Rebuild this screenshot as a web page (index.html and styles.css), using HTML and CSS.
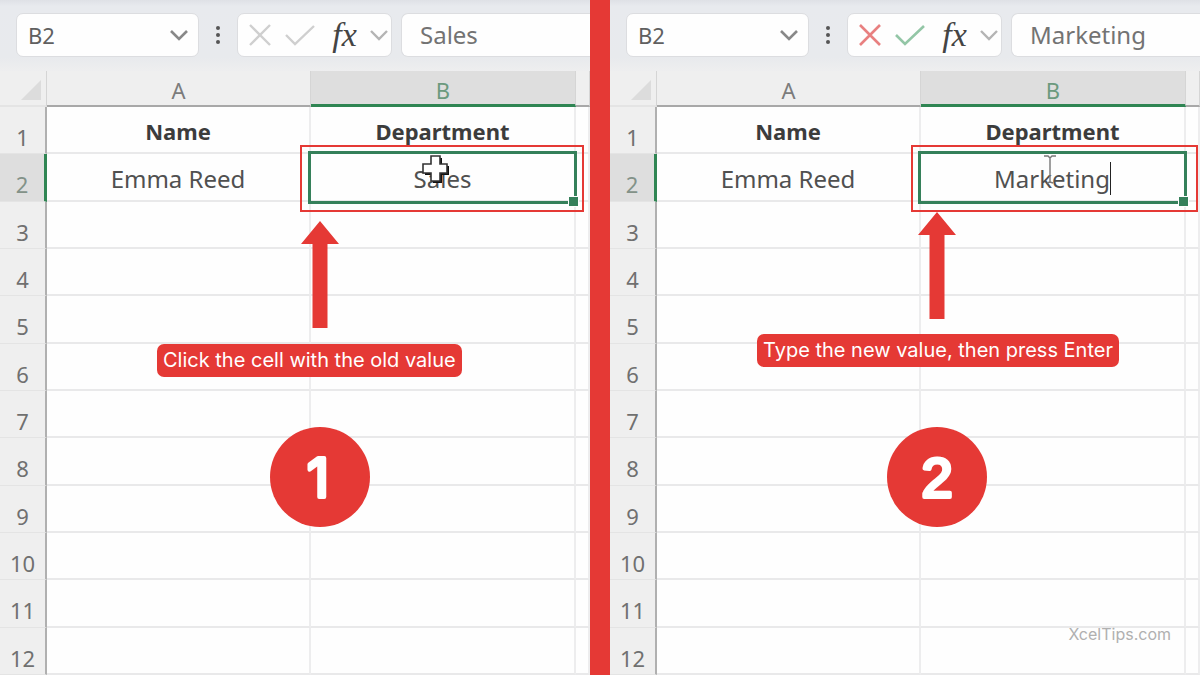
FILE: index.html
```html
<!DOCTYPE html>
<html lang="en">
<head>
    <meta charset="UTF-8">
    <meta name="viewport" content="width=device-width, initial-scale=1.0">
    <title>Edit a drop-down value - XcelTips</title>
    <link rel="stylesheet" href="styles.css">
</head>
<body>
    <main class="steps">
        <!-- Step 1: select the cell -->
        <section class="panel step-one">
            <div class="formula-bar">
                <div class="name-box">
                    <input type="text" class="name-input" value="B2" aria-label="Name box">
                    <button type="button" class="icon-btn" aria-label="Open name list">
                        <svg width="20" height="12" viewBox="0 0 20 12"><path d="M2 2l8 8 8-8" fill="none" stroke="#888" stroke-width="2.6"/></svg>
                    </button>
                </div>
                <svg class="dots" width="6" height="20" viewBox="0 0 6 20" fill="#555"><circle cx="3" cy="3" r="2"/><circle cx="3" cy="10" r="2"/><circle cx="3" cy="17" r="2"/></svg>
                <div class="fx-box">
                    <button type="button" class="icon-btn" aria-label="Cancel">
                        <svg width="24" height="24" viewBox="0 0 24 24"><path d="M2 2l20 20M22 2L2 22" fill="none" stroke="#cfcfcf" stroke-width="2.4"/></svg>
                    </button>
                    <button type="button" class="icon-btn" aria-label="Enter">
                        <svg width="30" height="22" viewBox="0 0 30 22"><path d="M1 11l9 9L29 2" fill="none" stroke="#cfcfcf" stroke-width="2.4"/></svg>
                    </button>
                    <button type="button" class="icon-btn fx">fx</button>
                    <button type="button" class="icon-btn" aria-label="More functions">
                        <svg width="18" height="12" viewBox="0 0 18 12"><path d="M1 2l8 8 8-8" fill="none" stroke="#b4b4b4" stroke-width="2.4"/></svg>
                    </button>
                </div>
                <input type="text" class="formula-input" value="Sales" aria-label="Formula bar">
            </div>
            <table class="sheet">
                <colgroup><col class="col-head"><col class="col-a"><col class="col-b"><col></colgroup>
                <thead>
                    <tr>
                        <th class="corner"><svg width="22" height="20" viewBox="0 0 22 20"><path d="M21 0v20H1z" fill="#dcdcdc"/></svg></th>
                        <th>A</th>
                        <th class="active">B</th>
                        <th></th>
                    </tr>
                </thead>
                <tbody>
                    <tr class="titles"><th>1</th><td>Name</td><td>Department</td><td></td></tr>
                    <tr>
                        <th class="active">2</th>
                        <td>Emma Reed</td>
                        <td class="selected">Sales
                            <span class="outline"></span>
                            <span class="handle"></span>
                            <span class="highlight"></span>
                            <svg class="cross-cursor" width="28" height="30" viewBox="0 0 28 30">
                                <path d="M11 3h9v8h7v9h-7v8h-9v-8H3v-9h8z" fill="#111"/>
                                <path d="M9 1h9v8h7v9h-7v8H9v-8H1V9h8z" fill="#fff" stroke="#333" stroke-width="1.6"/>
                            </svg>
                        </td>
                        <td></td>
                    </tr>
                    <tr><th>3</th><td></td><td></td><td></td></tr>
                    <tr><th>4</th><td></td><td></td><td></td></tr>
                    <tr><th>5</th><td></td><td></td><td></td></tr>
                    <tr><th>6</th><td></td><td></td><td></td></tr>
                    <tr><th>7</th><td></td><td></td><td></td></tr>
                    <tr><th>8</th><td></td><td></td><td></td></tr>
                    <tr><th>9</th><td></td><td></td><td></td></tr>
                    <tr><th>10</th><td></td><td></td><td></td></tr>
                    <tr><th>11</th><td></td><td></td><td></td></tr>
                    <tr><th>12</th><td></td><td></td><td></td></tr>
                </tbody>
            </table>
            <svg class="arrow" width="38" height="107" viewBox="0 0 38 107"><path d="M19 0l19 23H26.500v84h-15V23H0z" fill="#e53935"/></svg>
            <p class="caption">Click the cell with the old value</p>
            <svg class="badge" width="100" height="100" viewBox="0 0 100 100">
                <circle cx="50" cy="50" r="50"/>
                <text x="48" y="70">1</text>
            </svg>
        </section>

        <!-- Step 2: type the new value -->
        <section class="panel step-two">
            <div class="formula-bar">
                <div class="name-box">
                    <input type="text" class="name-input" value="B2" aria-label="Name box">
                    <button type="button" class="icon-btn" aria-label="Open name list">
                        <svg width="20" height="12" viewBox="0 0 20 12"><path d="M2 2l8 8 8-8" fill="none" stroke="#888" stroke-width="2.6"/></svg>
                    </button>
                </div>
                <svg class="dots" width="6" height="20" viewBox="0 0 6 20" fill="#555"><circle cx="3" cy="3" r="2"/><circle cx="3" cy="10" r="2"/><circle cx="3" cy="17" r="2"/></svg>
                <div class="fx-box">
                    <button type="button" class="icon-btn" aria-label="Cancel">
                        <svg width="24" height="24" viewBox="0 0 24 24"><path d="M2 2l20 20M22 2L2 22" fill="none" stroke="#e88080" stroke-width="2.6"/></svg>
                    </button>
                    <button type="button" class="icon-btn" aria-label="Enter">
                        <svg width="30" height="22" viewBox="0 0 30 22"><path d="M1 11l9 9L29 2" fill="none" stroke="#93c6a6" stroke-width="2.6"/></svg>
                    </button>
                    <button type="button" class="icon-btn fx">fx</button>
                    <button type="button" class="icon-btn" aria-label="More functions">
                        <svg width="18" height="12" viewBox="0 0 18 12"><path d="M1 2l8 8 8-8" fill="none" stroke="#b4b4b4" stroke-width="2.4"/></svg>
                    </button>
                </div>
                <input type="text" class="formula-input" value="Marketing" aria-label="Formula bar">
            </div>
            <table class="sheet">
                <colgroup><col class="col-head"><col class="col-a"><col class="col-b"><col></colgroup>
                <thead>
                    <tr>
                        <th class="corner"><svg width="22" height="20" viewBox="0 0 22 20"><path d="M21 0v20H1z" fill="#dcdcdc"/></svg></th>
                        <th>A</th>
                        <th class="active">B</th>
                        <th></th>
                    </tr>
                </thead>
                <tbody>
                    <tr class="titles"><th>1</th><td>Name</td><td>Department</td><td></td></tr>
                    <tr>
                        <th class="active">2</th>
                        <td>Emma Reed</td>
                        <td class="selected"><span class="editing">Marketing</span>
                            <span class="outline"></span>
                            <span class="handle"></span>
                            <span class="highlight"></span>
                            <svg class="text-cursor" width="14" height="30" viewBox="0 0 14 30"><path d="M1 1h4l2 2 2-2h4M7 3v24M4 28l3-1 3 1" fill="none" stroke="#777" stroke-width="1.4"/></svg>
                        </td>
                        <td></td>
                    </tr>
                    <tr><th>3</th><td></td><td></td><td></td></tr>
                    <tr><th>4</th><td></td><td></td><td></td></tr>
                    <tr><th>5</th><td></td><td></td><td></td></tr>
                    <tr><th>6</th><td></td><td></td><td></td></tr>
                    <tr><th>7</th><td></td><td></td><td></td></tr>
                    <tr><th>8</th><td></td><td></td><td></td></tr>
                    <tr><th>9</th><td></td><td></td><td></td></tr>
                    <tr><th>10</th><td></td><td></td><td></td></tr>
                    <tr><th>11</th><td></td><td></td><td></td></tr>
                    <tr><th>12</th><td></td><td></td><td></td></tr>
                </tbody>
            </table>
            <svg class="arrow" width="38" height="107" viewBox="0 0 38 107"><path d="M19 0l19 23H26.500v84h-15V23H0z" fill="#e53935"/></svg>
            <p class="caption">Type the new value, then press Enter</p>
            <svg class="badge" width="100" height="100" viewBox="0 0 100 100">
                <circle cx="50" cy="50" r="50"/>
                <text x="50" y="70">2</text>
            </svg>
            <span class="watermark">XcelTips.com</span>
        </section>
    </main>
</body>
</html>
```
FILE: styles.css
```css
* {
    box-sizing: border-box;
}

body {
    margin: 0;
    font-family: "Noto Sans", "Open Sans", sans-serif;
    color: #505050;
    background-color: #fefefe;
}

/* two panels with a red divider between them */
.steps {
    display: grid;
    grid-template-columns: 1fr 1fr;
    gap: 20px;
    min-height: 100vh;
    background-color: #e53935;
}

.panel {
    position: relative;
    overflow: hidden;
    background-color: #fefefe;
}

/* formula bar */
.formula-bar {
    display: flex;
    align-items: center;
    padding: 13px 0 14px 16px;
    background: linear-gradient(#dfe1e6, #e8eaee 6px, #e8eaed 58px, #eeeeef);
}

.name-box,
.fx-box,
.formula-input {
    height: 44px;
    background-color: #fefefe;
    border: 1px solid #dcdde0;
    border-radius: 7px;
}

.name-box {
    display: flex;
    align-items: center;
    width: 183px;
    padding: 0 9px 0 11px;
}

.name-input {
    flex: 1;
    min-width: 0;
    padding: 0;
    border: none;
    background: none;
    font: 22px "Noto Sans", sans-serif;
    color: #606060;
}

.dots {
    margin: 0 16px;
}

.fx-box {
    display: flex;
    align-items: center;
    justify-content: space-between;
    width: 155px;
    padding: 0 3px 0 10px;
}

.icon-btn {
    display: flex;
    padding: 0;
    border: none;
    background: none;
    cursor: pointer;
}

.fx {
    margin-left: 4px;
    font: italic 34px/36px "Liberation Serif", serif;
    color: #444;
}

.formula-input {
    flex: 1;
    min-width: 0;
    margin-left: 9px;
    padding: 0 18px 2px;
    border-right: none;
    border-radius: 7px 0 0 7px;
    font: 24px "Noto Sans", sans-serif;
    color: #737373;
}

/* worksheet grid */
.sheet {
    width: 100%;
    table-layout: fixed;
    border-collapse: separate;
    border-spacing: 0;
    font-size: 24px;
    line-height: 32px;
    text-align: center;
}

.col-head {
    width: 47px;
}

.col-a {
    width: 264px;
}

.col-b {
    width: 265px;
}

.sheet th,
.sheet td {
    padding: 0;
    font-weight: normal;
}

.sheet thead th {
    height: 36px;
    padding-top: 4px;
    border-right: 1px solid #d5d5d5;
    border-bottom: 2px solid #a8a8a8;
    background-color: #efefef;
    color: #7c7c7c;
    font-size: 22px;
    line-height: 28px;
}

.sheet thead .corner {
    border-bottom-color: #e4e4e4;
    text-align: right;
    padding-right: 4px;
}

.corner svg {
    display: block;
    margin-left: auto;
}

.sheet thead .active {
    background-color: #dedede;
    border-bottom: 3px solid #2f8553;
    color: #6c9a7e;
}

.sheet tbody tr {
    height: 47px;
}

.sheet tbody tr:nth-child(3n+2) {
    height: 48px;
}

.sheet tbody th {
    padding-top: 13px;
    border-right: 2px solid #b0b0b0;
    border-bottom: 1px solid #e4e4e4;
    background-color: #efefef;
    color: #707070;
    font-size: 22px;
}

.sheet tbody .active {
    border-right: 3px solid #2f8553;
    background-color: #dedede;
    color: #839288;
}

.sheet td {
    padding-top: 3px;
    border-right: 2px solid #ededee;
    border-bottom: 2px solid #e9e9ea;
}

.sheet .titles td {
    font-size: 22px;
    font-weight: bold;
    color: #3c3c3c;
}

/* selected cell, its outline and what lies over it */
.sheet .selected {
    position: relative;
}

.outline {
    position: absolute;
    inset: -3px -3px -4px -3px;
    border: 3px solid #35805a;
}

.handle {
    position: absolute;
    right: -5px;
    bottom: -7px;
    width: 11px;
    height: 11px;
    border: 1px solid #fefefe;
    background-color: #35805a;
}

.highlight {
    position: absolute;
    inset: -9px -10px -12px -11px;
    border: 2px solid #e53935;
}

.step-two .highlight {
    right: -14px;
    left: -10px;
}

.cross-cursor {
    position: absolute;
    left: 111px;
    top: 1px;
}

.text-cursor {
    position: absolute;
    left: 122px;
    top: 1px;
}

.editing {
    border-right: 1px solid #222;
}

/* callouts placed over the sheet */
.arrow,
.caption,
.badge,
.watermark {
    position: absolute;
}

.caption {
    margin: 0;
    padding: 4px 6px;
    border-radius: 7px;
    background-color: #e53935;
    color: #fff;
    font: 20px/25px Inter, sans-serif;
    white-space: nowrap;
}

.badge {
    top: 427px;
}

.badge circle {
    fill: #e53935;
}

.badge text {
    font: 400 56px "Liberation Sans", sans-serif;
    text-anchor: middle;
    fill: #fff;
    stroke: #fff;
    stroke-width: 4px;
    stroke-linejoin: round;
}

/* the 1 has no foot in this face */
.step-one .badge text {
    font: 400 54px Inter, sans-serif;
}

.step-one .arrow {
    left: 301px;
    top: 221px;
}

.step-one .caption {
    left: 157px;
    top: 344px;
}

.step-one .badge {
    left: 270px;
}

.step-two .arrow {
    left: 308px;
    top: 212px;
}

.step-two .caption {
    left: 147px;
    top: 334px;
}

.step-two .badge {
    left: 277px;
}

.watermark {
    right: 29px;
    bottom: 31px;
    color: #b0b0b0;
    font: 16px/20px Inter, sans-serif;
}
```
